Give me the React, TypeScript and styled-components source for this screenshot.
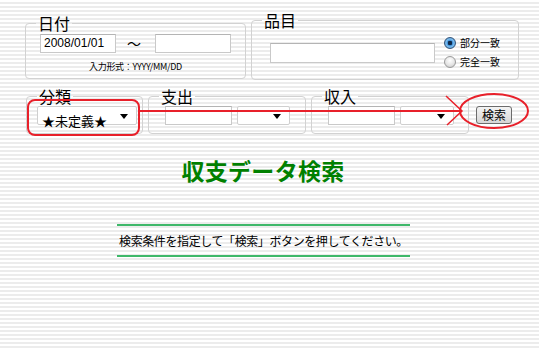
import React from "react";
import styled, {createGlobalStyle} from "styled-components";

const GlobalStyle = createGlobalStyle`
  html, body {
    margin: 0;
    padding: 0;
  }
  body {
    width: 539px;
    height: 350px;
    overflow: hidden;
    font-family: "Noto Sans CJK JP", "Liberation Sans", sans-serif;
    color: #000;
    background: repeating-linear-gradient(
      to bottom,
      #ffffff 0px,
      #ffffff 2px,
      #ececec 2px,
      #ececec 4px
    );
  }
`;

const Page = styled.div`
  position: relative;
  width: 539px;
  height: 350px;
  padding: 14px 0 0 25px;
  box-sizing: border-box;
`;

const Row = styled.div<{$top?: number}>`
  display: flex;
  align-items: flex-start;
  gap: 5px;
  margin-top: ${(p) => p.$top ?? 0}px;
`;

const Group = styled.fieldset<{$w: number; $h: number}>`
  width: ${(p) => p.$w}px;
  height: ${(p) => p.$h}px;
  box-sizing: border-box;
  margin: 0;
  padding: 0 10px;
  border: 1px solid #d2d2d2;
  border-radius: 4px;
  min-width: 0;
`;

const Legend = styled.legend`
  padding: 0 2px;
  font-size: 16px;
  line-height: 18px;
  font-weight: normal;
`;

const Line = styled.div<{$gap?: number}>`
  display: flex;
  align-items: center;
  gap: ${(p) => p.$gap ?? 6}px;
`;

const TextBox = styled.input<{$w: number; $h?: number}>`
  width: ${(p) => p.$w}px;
  height: ${(p) => p.$h ?? 19}px;
  box-sizing: border-box;
  margin: 0;
  padding: 0 3px;
  border: 1px solid #c9c9c9;
  border-top-color: #b4b4b4;
  background: #fff;
  font-family: "Liberation Sans", Arial, sans-serif;
  font-size: 12px;
  color: #000;
  outline: none;
`;

const Tilde = styled.span`
  font-size: 14px;
  margin: 0 14px 0 11px;
`;

const Hint = styled.div`
  margin-top: 8px;
  text-align: center;
  font-size: 9px;
  line-height: 11px;
  letter-spacing: -0.3px;
`;

const RadioCol = styled.div`
  display: flex;
  flex-direction: column;
  gap: 7px;
`;

const RadioLabel = styled.label`
  display: flex;
  align-items: center;
  gap: 4px;
  font-size: 10px;
  line-height: 12px;
`;

const Radio = styled.input.attrs({type: "radio"})`
  appearance: none;
  width: 12px;
  height: 12px;
  margin: 0;
  border-radius: 50%;
  border: 1px solid #9a9a9a;
  box-sizing: border-box;
  background: radial-gradient(circle at 50% 35%, #ffffff 0%, #e2e2e2 60%, #bcbcbc 100%);

  &:checked {
    border-color: #35557a;
    background: radial-gradient(circle at 50% 50%, #0e2a4a 0 2px, #3f8fd8 2.5px, #7fc0f0 4px, #2e6fb0 100%);
  }
`;

const SelectWrap = styled.div<{$w: number}>`
  position: relative;
  width: ${(p) => p.$w}px;
  height: 19px;
  box-sizing: border-box;
  border: 1px solid #cfcfcf;
  border-radius: 2px;
  background: #fff;
`;

const Select = styled.select`
  appearance: none;
  width: 100%;
  height: 100%;
  margin: 0;
  padding: 0 0 0 4px;
  border: none;
  background: transparent;
  font-family: "Noto Sans CJK JP", sans-serif;
  font-size: 13px;
  color: #000;
  outline: none;
`;

const Arrow = styled.span`
  position: absolute;
  right: 8px;
  top: 7px;
  width: 0;
  height: 0;
  border-left: 4px solid transparent;
  border-right: 4px solid transparent;
  border-top: 5px solid #000;
  pointer-events: none;
`;

const SearchButton = styled.button`
  width: 36px;
  height: 18px;
  margin: 19px 0 0 2px;
  padding: 0;
  border: 1px solid #6c6c6c;
  border-radius: 3px;
  background: linear-gradient(to bottom, #f4f4f4, #d6d6d6);
  font-family: "Noto Sans CJK JP", sans-serif;
  font-size: 12px;
  line-height: 14px;
  color: #000;
`;

const Title = styled.h1`
  width: 526px;
  margin: 23px 0 0 -25px;
  text-align: center;
  font-size: 23px;
  line-height: 26px;
  font-weight: bold;
  color: #008000;
  letter-spacing: 0.3px;
`;

const Message = styled.div`
  width: 293px;
  margin: 41px 0 0 92px;
  padding: 8px 0 7px;
  border-top: 2px solid #3fb86a;
  border-bottom: 2px solid #3fb86a;
  text-align: center;
  white-space: nowrap;
  font-size: 12px;
  line-height: 14px;
  letter-spacing: -0.4px;
`;

const Overlay = styled.svg`
  position: absolute;
  left: 0;
  top: 0;
  pointer-events: none;
`;

const App: React.FC = () => {
  return (
    <Page>
      <GlobalStyle />
      <Row>
        <Group $w={221} $h={65}>
          <Legend>日付</Legend>
          <Line $gap={0} style={{marginTop: 1, marginLeft: 4}}>
            <TextBox $w={76} defaultValue="2008/01/01" />
            <Tilde>〜</Tilde>
            <TextBox $w={76} />
          </Line>
          <Hint>入力形式：YYYY/MM/DD</Hint>
        </Group>
        <Group $w={268} $h={69} style={{marginTop: -3}}>
          <Legend>品目</Legend>
          <Line $gap={9} style={{marginTop: 8, marginLeft: 8}}>
            <TextBox $w={165} $h={20} />
            <RadioCol>
              <RadioLabel>
                <Radio name="match" defaultChecked />
                部分一致
              </RadioLabel>
              <RadioLabel>
                <Radio name="match" />
                完全一致
              </RadioLabel>
            </RadioCol>
          </Line>
        </Group>
      </Row>
      <Row $top={7} style={{marginLeft: 1}}>
        <Group $w={117} $h={47}>
          <Legend>分類</Legend>
          <SelectWrap $w={100} style={{marginTop: 1}}>
            <Select defaultValue="none">
              <option value="none">★未定義★</option>
            </Select>
            <Arrow />
          </SelectWrap>
        </Group>
        <Group $w={158} $h={47}>
          <Legend>支出</Legend>
          <Line $gap={5} style={{marginTop: 1, marginLeft: 6}}>
            <TextBox $w={67} />
            <SelectWrap $w={53}>
              <Select />
              <Arrow />
            </SelectWrap>
          </Line>
        </Group>
        <Group $w={158} $h={47}>
          <Legend>収入</Legend>
          <Line $gap={5} style={{marginTop: 1, marginLeft: 6}}>
            <TextBox $w={67} />
            <SelectWrap $w={54}>
              <Select />
              <Arrow />
            </SelectWrap>
          </Line>
        </Group>
        <SearchButton>検索</SearchButton>
      </Row>
      <Title>収支データ検索</Title>
      <Message>検索条件を指定して「検索」ボタンを押してください。</Message>

      <Overlay width={539} height={350} viewBox="0 0 539 350">
        <rect x={28} y={100} width={111} height={35} rx={7} ry={7} fill="none" stroke="#e8202a" strokeWidth={2} />
        <line x1={139} y1={111} x2={462} y2={111} stroke="#e8202a" strokeWidth={2} />
        <polyline points="446,96 462,111 447,125" fill="none" stroke="#e8202a" strokeWidth={1.5} />
        <ellipse cx={494} cy={111} rx={34} ry={17} fill="none" stroke="#e8202a" strokeWidth={2} />
      </Overlay>
    </Page>
  );
};

export default App;
